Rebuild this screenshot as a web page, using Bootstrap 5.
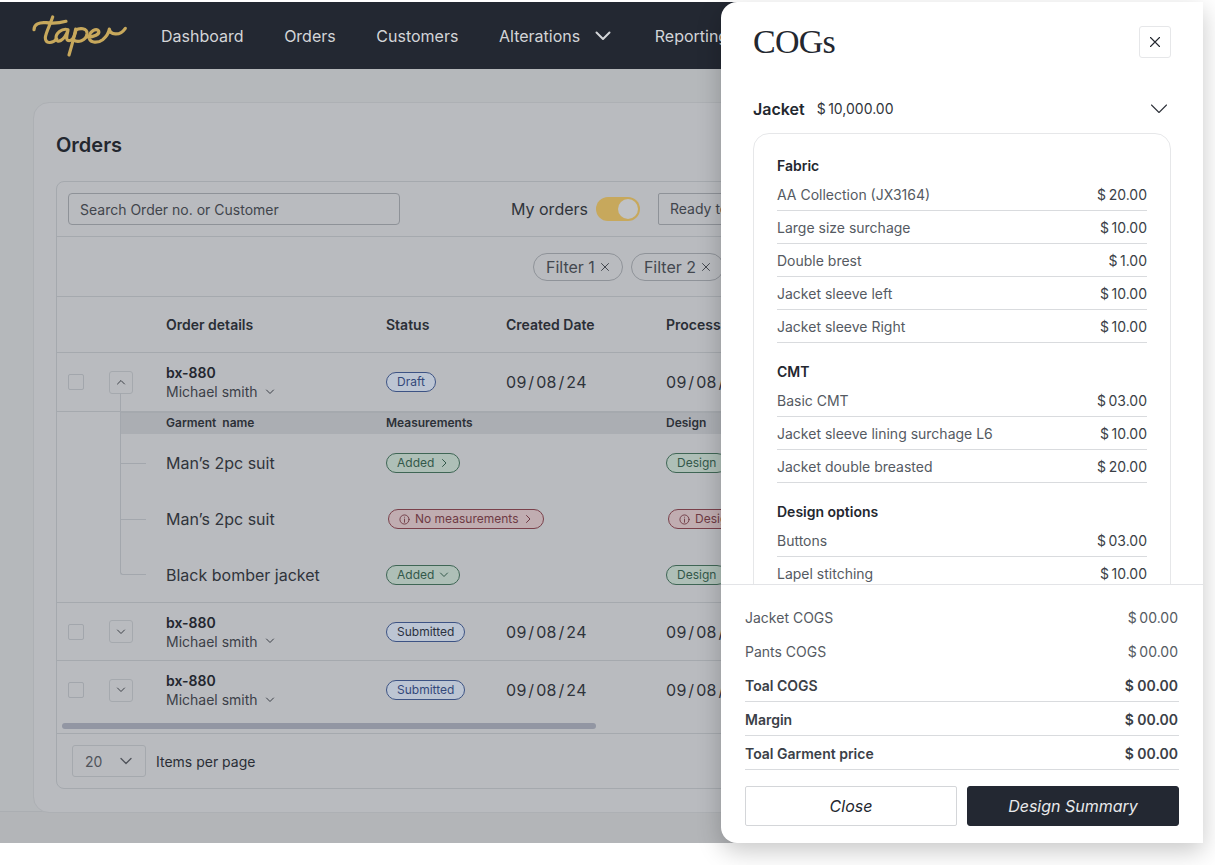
<!DOCTYPE html>
<html lang="en">
<head>
<meta charset="utf-8">
<title>Orders</title>
<link href="https://cdn.jsdelivr.net/npm/bootstrap@5.3.0/dist/css/bootstrap.min.css" rel="stylesheet">
<style>
html,body{height:100%;overflow:hidden;background:#fff;font-family:"Inter","Liberation Sans",sans-serif;color:#2a2e36}
.stage{position:relative;width:1215px;height:865px;padding-top:2px}
.frame{width:1203px;height:841px;overflow:hidden;background:#b3b5b8;white-space:nowrap}
.topbar{height:67px;background:#232832;padding:0 0 0 32px;gap:33px;flex-wrap:nowrap;justify-content:flex-start}
.topmenu{gap:40.600px;font-size:16px;color:#d3d5d8}
.chevmenu{gap:14px}
.chevmenu svg{margin-right:2px}
.sheet{height:743px;background:#b5b8bb;padding:33px 0 0 33px;border-bottom:1px solid #abaeb2}
.ordercard{width:1400px;height:711px;background:#b9bbbf;border:1px solid #adb0b4;border-radius:16px;padding:23px 22px}
.ordertitle{font-size:20px;font-weight:600;line-height:38px;margin:0 0 17px;color:#23272f}
.tablebox{height:608px;border:1px solid #a5a9ae;border-radius:8px;font-size:14px}
.toolrow{height:55px;border-bottom:1px solid #a5a9ae;padding:0 11px}
.searchbox{width:332px;height:32px;border:1px solid #8e9298;border-radius:4px;padding:0 11px;line-height:32px;color:#41454c;font-size:14px;background:transparent}
.myorders{font-size:16px;margin-left:111px;width:85px;color:#30343b}
.goldswitch{width:44px;height:24px;border-radius:12px;background:#c7a85c;position:relative;margin-right:18px}
.goldswitch::after{content:"";position:absolute;right:2px;top:2px;width:20px;height:20px;border-radius:50%;background:#c0c2c5}
.readybox{width:220px;height:32px;border:1px solid #8e9298;border-radius:2px;padding:0 11px;line-height:30px;font-size:14px;color:#41454c}
.filterrow{height:60px;border-bottom:1px solid #a5a9ae;padding-left:476px;gap:8px}
.filterchip{height:28px;border:1px solid #8f9399;border-radius:14px;padding:0 12px;font-size:16px;color:#44484f;line-height:26px;gap:5px}
.gridrow{display:grid;grid-template-columns:52px 57px 220px 120px 160px 1fr;align-items:center;border-bottom:1px solid #a5a9ae}
.headrow{height:56px;font-weight:600;color:#2a2e36}
.orderrow{height:58px}
.firstrow{height:59px;border-bottom:1px solid #a5a9ae}
.tick{display:block;width:16px;height:16px;margin-left:11px;border:1px solid #a2a6ac;border-radius:2px}
.expander{width:24px;height:23px;border:1px solid #a5a9ae;border-radius:3px;color:#3d4148;position:relative}
.ordername{font-weight:600;line-height:19px;color:#23272f}
.customer{line-height:19px;color:#3c4048;gap:7px}
.datecell{font-size:16px;letter-spacing:.3px;color:#2f333a}
.statuspill{height:20px;border-radius:10px;border:1px solid;font-size:12px;font-weight:400;padding:0 10px;line-height:18px;gap:5px;display:inline-flex;align-items:center;width:max-content}
.pill-blue{border-color:#3d5384;color:#33487a;background:#bcc5d3}
.pill-dark{color:#2a3140}
.pill-green{border-color:#3f6655;color:#33584a;background:#aebfb7}
.pill-red{border-color:#7a414b;color:#6e3a44;background:#c0adb1;margin-left:2px}
.garmentblock{position:relative;height:191px;border-bottom:1px solid #a5a9ae}
.garmenthead{height:22px;margin-left:64px;margin-bottom:1px;padding-bottom:2px;background:#abaeb3;font-size:12px;font-weight:600;grid-template-columns:45px 220px 280px 1fr;border-bottom:0;border-top:1px solid #a5a9ae;color:#2d3138}
.garmentrow{height:56px;border-bottom:0;font-size:16px;color:#30343b}
.treeline{position:absolute;left:63px;top:-19px;width:26px;height:182px;border-left:1px solid #a3a7ad;border-bottom:1px solid #a3a7ad;border-bottom-left-radius:3px}
.branch{position:absolute;left:64px;width:25px;height:1px;background:#a3a7ad}
.branch-one{top:51px}
.branch-two{top:107px}
.scrolltrack{height:16px;margin-top:-1px;padding:5px 0 0 5px;border-bottom:1px solid #a5a9ae}
.scrollthumb{width:534px;height:6px;border-radius:3px;background:#9296a3}
.pager{height:54px;padding:0 15px;gap:10px}
.pagesize{width:74px;height:32px;border:1px solid #a5a9ae;border-radius:3px;padding:0 12px;font-size:14px;color:#50545b}
.spanpair{grid-column:span 2}
.drawer{position:absolute;left:721px;top:2px;width:482px;height:841px;background:#fff;border-radius:16px 0 0 16px;box-shadow:0 8px 24px rgba(0,0,0,.22);overflow:hidden;display:flex;flex-direction:column;white-space:nowrap}
.drawertop{height:84px;padding:24px 32px 0;flex:none}
.drawertitle{font-family:"Liberation Serif",serif;font-size:34px;font-weight:400;margin:0;line-height:32px;color:#23272f;letter-spacing:-.8px}
.closer{width:32px;height:32px;padding:0;border:1px solid #e6e7e9;border-radius:3px;color:#23272f;background:#fff}
.drawerbody{flex:1;min-height:0;overflow:hidden;padding:0 32px}
.jacketline{height:47px;padding-top:11px;font-size:14px;color:#30343b;gap:12px}
.jacketline b{font-size:16px;font-weight:600;color:#23272f;line-height:24px}
.jacketprice{line-height:24px}
.jacketchev{margin-top:4px}
.costpanel{border:1px solid #e6e7e9;border-radius:16px;padding:23px 23px 0;height:600px;font-size:14px;color:#555a62}
.costhead{font-size:14px;font-weight:600;color:#23272f;line-height:17px;margin:0 0 4px}
.costline{height:33px;border-bottom:1px solid #d9dbde;padding-top:6px}
.costgroup{margin-bottom:20px}
.costval{color:#3b3f47}
.drawerfoot{flex:none;height:259px;border-top:1px solid #e3e4e7;padding:15px 24px 0;font-size:14px;color:#555a62}
.sumline{height:34px}
.sumline span:last-child{margin-right:1px}
.sumstrong{font-weight:600;color:#3b3f47;border-bottom:1px solid #d9dbde;padding-top:2px}
.sumgap{height:16px}
.btnpair{gap:10px}
.btn.actbtn{flex:1;height:40px;border-radius:2px;font-size:16px;font-style:italic;padding:0;color:#23272f;border:1px solid #d4d6d9;background:#fff}
.btn.actbtn.solid{background:#232832;border-color:#232832;color:#e8e9eb;border-radius:3px}
.ico{display:block;fill:none;stroke:currentColor;stroke-linecap:round;stroke-linejoin:round}
</style>
</head>
<body>
<div class="stage">
  <div class="frame">
    <nav class="navbar topbar d-flex align-items-center">
      <svg width="96" height="42" viewBox="0 0 288 126" fill="none" stroke="#c7a85c" stroke-width="9.500" stroke-linecap="round" stroke-linejoin="round" aria-label="taper">
        <path d="M6 44C6 28 22 21 42 23C62 26 84 24 102 19"/>
        <path d="M62 6C54 30 40 56 40 68C40 86 60 87 74 72"/>
        <path d="M108 44C90 38 70 56 72 71C74 85 96 80 108 46C103 66 100 80 116 76C124 73 128 62 131 50"/>
        <path d="M131 42C126 70 118 96 111 120"/>
        <path d="M131 46C142 38 166 38 165 56C163 78 136 84 124 74"/>
        <path d="M166 66C186 66 204 58 200 48C193 38 174 48 172 65C170 84 196 86 212 74C222 66 230 54 232 42C234 58 262 66 280 40"/>
      </svg>
      <div class="d-flex align-items-center topmenu">
        <span>Dashboard</span><span>Orders</span><span>Customers</span>
        <span class="d-flex align-items-center chevmenu">Alterations
          <svg class="ico" width="18" height="18" viewBox="0 0 18 18" stroke-width="2"><path d="M2.500 5.500 9 12l6.500-6.500"/></svg>
        </span>
        <span>Reporting</span>
      </div>
    </nav>
    <main class="sheet">
      <section class="ordercard">
        <h1 class="ordertitle">Orders</h1>
        <div class="tablebox">
          <div class="toolrow d-flex align-items-center">
            <div class="searchbox">Search Order no. or Customer</div>
            <span class="myorders">My orders</span>
            <span class="goldswitch"></span>
            <div class="readybox">Ready to process</div>
          </div>
          <div class="filterrow d-flex align-items-center">
            <span class="filterchip d-inline-flex align-items-center">Filter 1 <svg class="ico" width="10" height="10" viewBox="0 0 10 10"><path d="m1.500 1.500 7 7m0-7-7 7"/></svg></span>
            <span class="filterchip d-inline-flex align-items-center">Filter 2 <svg class="ico" width="10" height="10" viewBox="0 0 10 10"><path d="m1.500 1.500 7 7m0-7-7 7"/></svg></span>
          </div>
          <div class="gridrow headrow">
            <span></span><span></span><span>Order details</span><span>Status</span><span>Created Date</span><span>Process date</span>
          </div>

          <div class="gridrow firstrow">
            <span class="tick"></span>
            <span class="expander d-flex align-items-center justify-content-center"><svg class="ico" width="10" height="10" viewBox="0 0 10 10"><path d="m1.500 7 3.500-3.500L8.500 7"/></svg></span>
            <div><div class="ordername">bx-880</div><div class="customer d-flex align-items-center">Michael smith <svg class="ico" width="10" height="10" viewBox="0 0 10 10"><path d="M1.500 3 5 6.500 8.500 3"/></svg></div></div>
            <span class="statuspill pill-blue">Draft</span>
            <span class="datecell">09&#8202;/&#8202;08&#8202;/&#8202;24</span>
            <span class="datecell">09&#8202;/&#8202;08&#8202;/&#8202;24</span>
          </div>
          <div class="garmentblock">
            <span class="treeline"></span>
            <span class="branch branch-one"></span>
            <span class="branch branch-two"></span>
            <div class="gridrow garmenthead"><span></span><span>Garment&nbsp; name</span><span>Measurements</span><span>Design</span></div>
            <div class="gridrow garmentrow">
              <span></span><span></span><span>Man’s 2pc suit</span>
              <span class="statuspill pill-green spanpair">Added <svg class="ico" width="10" height="10" viewBox="0 0 10 10"><path d="M3.500 1.500 7 5 3.500 8.500"/></svg></span>
              <span class="statuspill pill-green">Design</span>
            </div>
            <div class="gridrow garmentrow">
              <span></span><span></span><span>Man’s 2pc suit</span>
              <span class="statuspill pill-red spanpair"><svg class="ico" width="11" height="11" viewBox="0 0 12 12"><circle cx="6" cy="6" r="5"/><path d="M6 5.500V9M6 3.400v.1"/></svg>No measurements <svg class="ico" width="10" height="10" viewBox="0 0 10 10"><path d="M3.500 1.500 7 5 3.500 8.500"/></svg></span>
              <span class="statuspill pill-red"><svg class="ico" width="11" height="11" viewBox="0 0 12 12"><circle cx="6" cy="6" r="5"/><path d="M6 5.500V9M6 3.400v.1"/></svg>Design</span>
            </div>
            <div class="gridrow garmentrow">
              <span></span><span></span><span>Black bomber jacket</span>
              <span class="statuspill pill-green spanpair">Added <svg class="ico" width="10" height="10" viewBox="0 0 10 10"><path d="M1.500 3 5 6.500 8.500 3"/></svg></span>
              <span class="statuspill pill-green">Design</span>
            </div>
          </div>

          <div class="gridrow orderrow">
            <span class="tick"></span>
            <span class="expander d-flex align-items-center justify-content-center"><svg class="ico" width="10" height="10" viewBox="0 0 10 10"><path d="M1.500 3 5 6.500 8.500 3"/></svg></span>
            <div><div class="ordername">bx-880</div><div class="customer d-flex align-items-center">Michael smith <svg class="ico" width="10" height="10" viewBox="0 0 10 10"><path d="M1.500 3 5 6.500 8.500 3"/></svg></div></div>
            <span class="statuspill pill-blue pill-dark">Submitted</span>
            <span class="datecell">09&#8202;/&#8202;08&#8202;/&#8202;24</span>
            <span class="datecell">09&#8202;/&#8202;08&#8202;/&#8202;24</span>
          </div>
          <div class="gridrow orderrow border-0">
            <span class="tick"></span>
            <span class="expander d-flex align-items-center justify-content-center"><svg class="ico" width="10" height="10" viewBox="0 0 10 10"><path d="M1.500 3 5 6.500 8.500 3"/></svg></span>
            <div><div class="ordername">bx-880</div><div class="customer d-flex align-items-center">Michael smith <svg class="ico" width="10" height="10" viewBox="0 0 10 10"><path d="M1.500 3 5 6.500 8.500 3"/></svg></div></div>
            <span class="statuspill pill-blue">Submitted</span>
            <span class="datecell">09&#8202;/&#8202;08&#8202;/&#8202;24</span>
            <span class="datecell">09&#8202;/&#8202;08&#8202;/&#8202;24</span>
          </div>
          <div class="scrolltrack"><div class="scrollthumb"></div></div>
          <div class="pager d-flex align-items-center">
            <div class="pagesize d-flex align-items-center justify-content-between">20 <svg class="ico" width="14" height="14" viewBox="0 0 14 14" stroke-width="1.300"><path d="M2 4.500 7 9.500l5-5"/></svg></div>
            <span>Items per page</span>
          </div>
        </div>
      </section>
    </main>
  </div>

  <aside class="drawer">
    <header class="drawertop d-flex justify-content-between align-items-start">
      <h2 class="drawertitle">COGs</h2>
      <button type="button" class="btn closer d-flex align-items-center justify-content-center" aria-label="Close"><svg class="ico" width="12" height="12" viewBox="0 0 12 12" stroke-width="1.100"><path d="m1.500 1.500 9 9m0-9-9 9"/></svg></button>
    </header>
    <div class="drawerbody">
      <div class="jacketline d-flex align-items-start">
        <b>Jacket</b><span class="jacketprice">$&#8201;10,000.00</span>
        <svg class="ico ms-auto me-1 jacketchev" width="16" height="16" viewBox="0 0 16 16" stroke-width="1.100"><path d="M.5 4 8 11.500 15.500 4"/></svg>
      </div>
      <div class="costpanel">
        <div class="costgroup">
          <h3 class="costhead">Fabric</h3>
          <div class="costline d-flex justify-content-between"><span>AA Collection (JX3164)</span><span class="costval">$&#8201;20.00</span></div>
          <div class="costline d-flex justify-content-between"><span>Large size surchage</span><span class="costval">$&#8201;10.00</span></div>
          <div class="costline d-flex justify-content-between"><span>Double brest</span><span class="costval">$&#8201;1.00</span></div>
          <div class="costline d-flex justify-content-between"><span>Jacket sleeve left</span><span class="costval">$&#8201;10.00</span></div>
          <div class="costline d-flex justify-content-between"><span>Jacket sleeve Right</span><span class="costval">$&#8201;10.00</span></div>
        </div>
        <div class="costgroup">
          <h3 class="costhead">CMT</h3>
          <div class="costline d-flex justify-content-between"><span>Basic CMT</span><span class="costval">$&#8201;03.00</span></div>
          <div class="costline d-flex justify-content-between"><span>Jacket sleeve lining surchage L6</span><span class="costval">$&#8201;10.00</span></div>
          <div class="costline d-flex justify-content-between"><span>Jacket double breasted</span><span class="costval">$&#8201;20.00</span></div>
        </div>
        <div class="costgroup">
          <h3 class="costhead">Design options</h3>
          <div class="costline d-flex justify-content-between"><span>Buttons</span><span class="costval">$&#8201;03.00</span></div>
          <div class="costline d-flex justify-content-between"><span>Lapel stitching</span><span class="costval">$&#8201;10.00</span></div>
        </div>
      </div>
    </div>
    <footer class="drawerfoot">
      <div class="sumline d-flex justify-content-between align-items-center"><span>Jacket COGS</span><span>$&#8201;00.00</span></div>
      <div class="sumline d-flex justify-content-between align-items-center"><span>Pants COGS</span><span>$&#8201;00.00</span></div>
      <div class="sumline sumstrong d-flex justify-content-between align-items-center"><span>Toal COGS</span><span>$ 00.00</span></div>
      <div class="sumline sumstrong d-flex justify-content-between align-items-center"><span>Margin</span><span>$ 00.00</span></div>
      <div class="sumline sumstrong d-flex justify-content-between align-items-center"><span>Toal Garment price</span><span>$ 00.00</span></div>
      <div class="sumgap"></div>
      <div class="btnpair d-flex">
        <button type="button" class="btn actbtn">Close</button>
        <button type="button" class="btn actbtn solid">Design Summary</button>
      </div>
    </footer>
  </aside>
</div>
<script src="https://cdn.jsdelivr.net/npm/bootstrap@5.3.0/dist/js/bootstrap.bundle.min.js"></script>
</body>
</html>
